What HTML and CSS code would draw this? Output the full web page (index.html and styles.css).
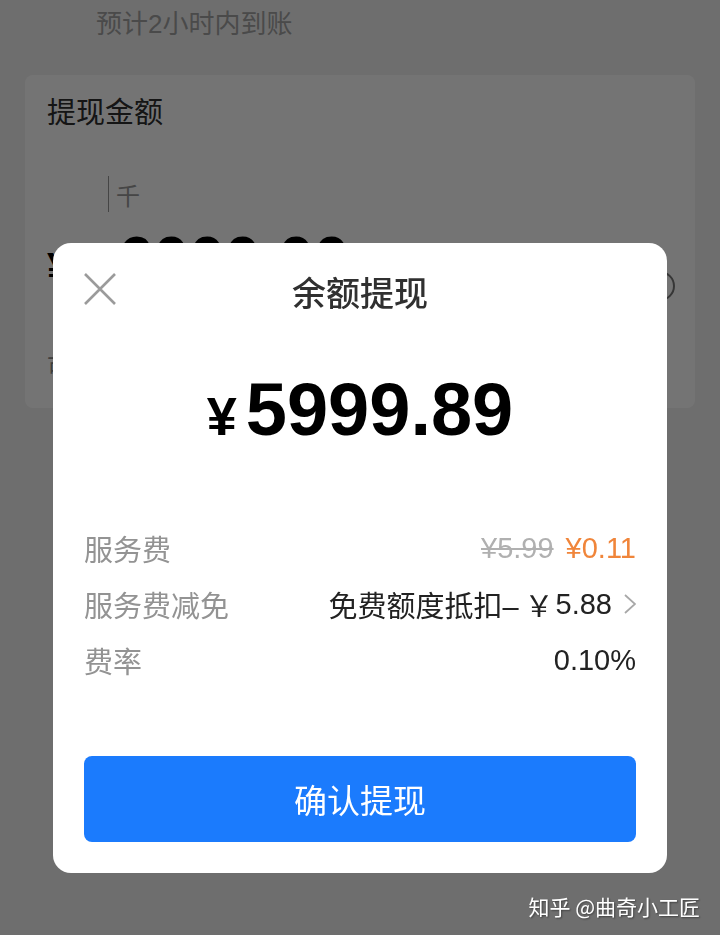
FILE: index.html
```html
<!DOCTYPE html>
<html lang="zh-CN">
<head>
<meta charset="utf-8">
<title>余额提现</title>
<link rel="stylesheet" href="styles.css">
</head>
<body>
<div class="page">
  <div class="top">
    <div class="eta">预计2小时内到账</div>
  </div>
  <div class="card">
    <div class="card-title">提现金额</div>
    <div class="input-hint"><span class="caret"></span><span class="unit">千</span></div>
    <div class="amount-row">
      <span class="amount-yen">¥</span>
      <span class="amount-big">6000.00</span>
      <span class="clear-btn"></span>
    </div>
    <div class="avail">可提现余额 ¥5999.89</div>
  </div>
</div>

<div class="mask">
  <div class="modal">
    <div class="modal-head">
      <button class="close" aria-label="关闭">
        <svg width="34" height="34" viewBox="0 0 34 34"><path d="M2 2 L32 32 M32 2 L2 32" stroke="#9b9b9b" stroke-width="2.6" fill="none"/></svg>
      </button>
      <div class="modal-title">余额提现</div>
      <span></span>
    </div>
    <div class="total"><span class="total-yen">¥</span><span class="total-num">5999.89</span></div>
    <div class="rows">
      <div class="row">
        <span class="label">服务费</span>
        <span class="value"><s class="old">¥5.99</s><span class="fee">¥0.11</span></span>
      </div>
      <div class="row">
        <span class="label">服务费减免</span>
        <span class="value dark">免费额度抵扣–<span class="yen-fw">￥</span>5.88<svg class="chev" width="12" height="22" viewBox="0 0 12 22"><path d="M1 2 L11 11 L1 20" stroke="#a8a8a8" stroke-width="1.8" fill="none"/></svg></span>
      </div>
      <div class="row">
        <span class="label">费率</span>
        <span class="value dark">0.10%</span>
      </div>
    </div>
    <button class="confirm">确认提现</button>
  </div>
  <div class="watermark">知乎 @曲奇小工匠</div>
</div>
</body>
</html>
```

FILE: styles.css
```css
* { box-sizing: border-box; }
html, body { margin: 0; padding: 0; }
body {
  width: 720px;
  height: 935px;
  overflow: hidden;
  background: #f2f2f2;
  font-family: "Liberation Sans", "Noto Sans CJK SC", sans-serif;
}

.page { width: 720px; }
.top { height: 75px; padding: 7px 0 0 96px; }
.eta { font-size: 26px; line-height: 34px; color: #a3a3a3; }

.card {
  margin: 0 25px;
  height: 333px;
  background: #fff;
  border-radius: 8px;
  padding: 18px 20px 0 22px;
}
.card-title { font-size: 29px; line-height: 40px; color: #2e2e2e; }
.input-hint { display: flex; align-items: center; height: 36px; margin: 43px 0 0 61px; }
.caret { width: 1px; height: 36px; background: #999; }
.unit { font-size: 24px; color: #9a9a9a; margin-left: 7px; }
.amount-row { display: flex; align-items: flex-start; margin-top: 16px; height: 64px; }
.amount-yen { width: 71px; font-size: 42px; font-weight: 700; line-height: 64px; padding-top: 8px; color: #000; }
.amount-big { font-size: 64px; line-height: 64px; font-weight: 700; color: #000; }
.clear-btn { margin: 43px 0 0 auto; width: 30px; height: 30px; border: 2px solid #777; border-radius: 50%; }
.avail { margin-top: 56px; font-size: 23px; color: #888; }

.mask {
  position: fixed;
  inset: 0;
  background: rgba(0, 0, 0, 0.545);
  display: flex;
  flex-direction: column;
  align-items: center;
  padding-top: 243px;
}

.modal {
  width: 614px;
  height: 630px;
  background: #fff;
  border-radius: 18px;
  padding: 0 31px 31px;
  display: flex;
  flex-direction: column;
}
.modal-head {
  height: 98px;
  display: grid;
  grid-template-columns: 1fr auto 1fr;
  align-items: center;
}
.close {
  justify-self: start;
  margin: -6px 0 0 -1px;
  padding: 0;
  border: 0;
  background: none;
  width: 34px;
  height: 34px;
  display: flex;
}
.modal-title {
  font-family: "Noto Sans CJK SC", sans-serif;
  font-size: 34px;
  font-weight: 500;
  color: #303030;
  line-height: 98px;
}

.total {
  margin-top: 32px;
  height: 74px;
  line-height: 74px;
  text-align: center;
  color: #000;
  font-weight: 700;
  white-space: nowrap;
}
.total-yen { font-size: 54px; margin-right: 9px; }
.total-num { font-size: 74px; }

.rows { margin-top: 73px; }
.row {
  height: 56px;
  display: flex;
  align-items: center;
  justify-content: space-between;
  font-size: 29px;
}
.label { color: #939393; font-family: "Noto Sans CJK SC", sans-serif; }
.value { display: flex; align-items: center; white-space: nowrap; }
.dark { color: #222; }
.yen-fw { font-family: "Noto Sans CJK SC", sans-serif; margin: 0 2px 0 6px; }
.old { color: #b0b0b0; text-decoration: line-through; text-decoration-thickness: 2px; margin-right: 12px; }
.fee { color: #f0853a; }
.chev { margin-left: 12px; }

.confirm {
  margin-top: 68px;
  height: 86px;
  width: 100%;
  border: 0;
  border-radius: 8px;
  background: #1b7bfd;
  color: #fff;
  font-family: "Noto Sans CJK SC", sans-serif;
  font-size: 33px;
}

.watermark {
  position: absolute;
  right: 20px;
  bottom: 14px;
  font-family: "Noto Sans CJK SC", sans-serif;
  font-size: 21px;
  line-height: 30px;
  color: #fff;
  text-shadow: 1px 1px 2px rgba(0,0,0,0.45);
}
```
